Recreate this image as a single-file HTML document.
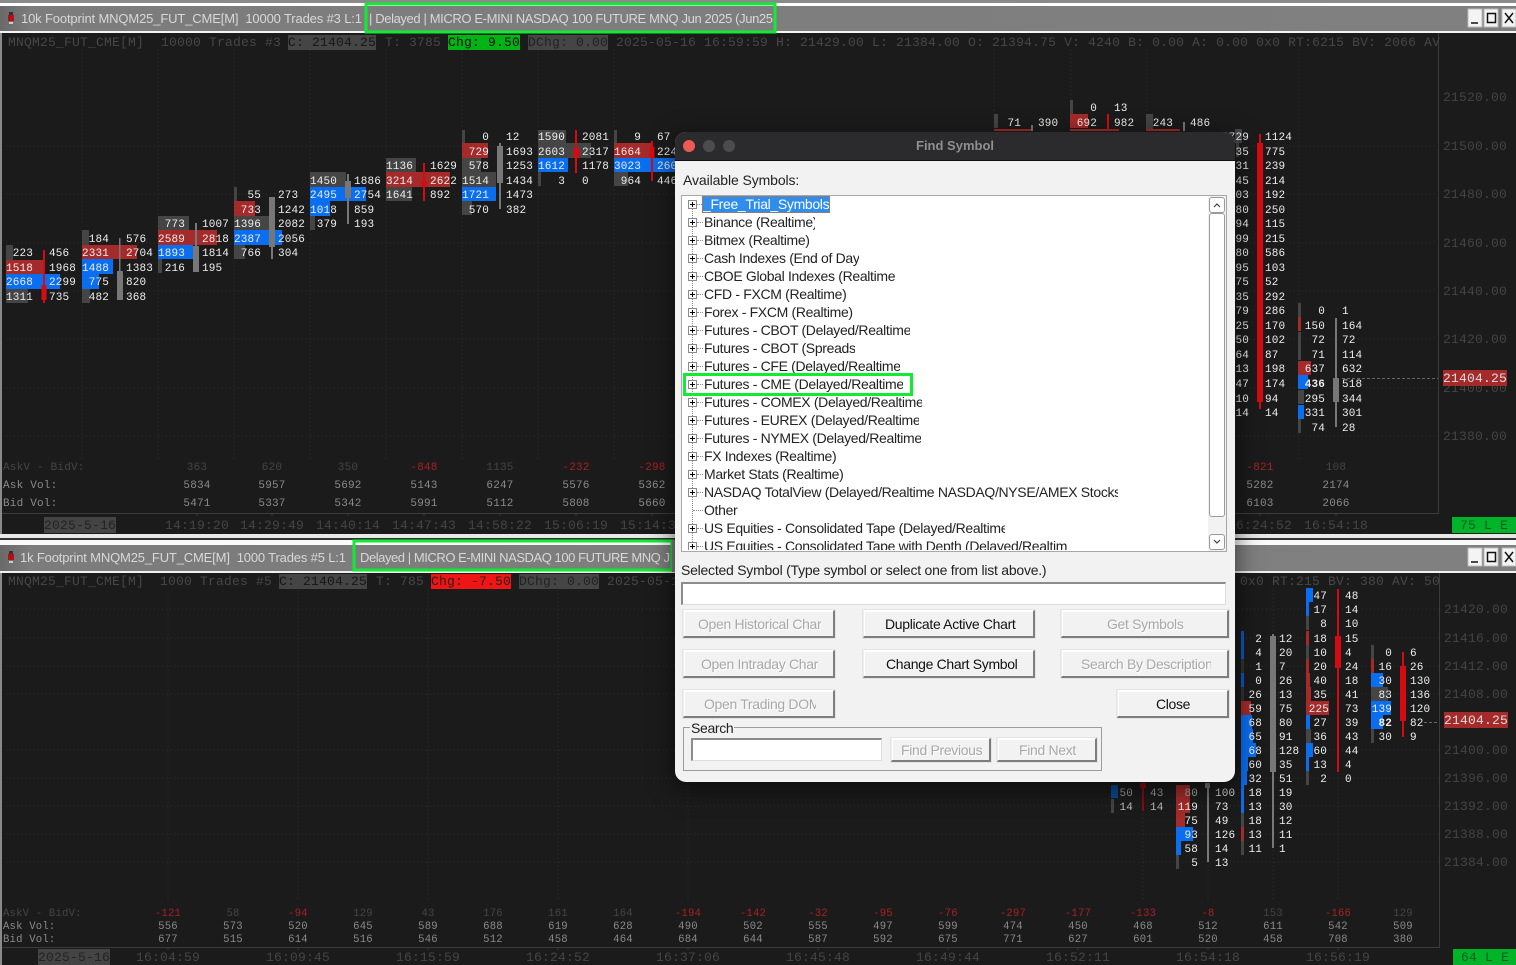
<!DOCTYPE html>
<html><head><meta charset="utf-8"><title>Find Symbol</title>
<style>
html,body{margin:0;padding:0;background:#1b1b1b;width:1516px;height:965px;overflow:hidden}
svg{position:absolute;left:0;top:0}
text{font-family:"Liberation Mono",monospace;white-space:pre}
.f text{font-size:11px;letter-spacing:.15px;fill:#eee}
.f .e{text-anchor:end}
.h text{font-size:13px;letter-spacing:.2px;fill:#474747}
.s text{font-size:11px;letter-spacing:.2px;fill:#8a8a8a;text-anchor:middle}
.s .g{fill:#454545}.s .r{fill:#a82222}.s .l{text-anchor:start}
.ss text{font-size:10.6px}
.t text{font-size:13px;letter-spacing:.2px;fill:#454545;text-anchor:middle}
.a text{font-size:13px;letter-spacing:.2px;fill:#444}
.tt{font-family:"Liberation Sans",sans-serif!important;font-size:13px;fill:#d8d8d8}
.gr{fill:#454545}.re{fill:#a52a2a}.bl{fill:#0a6ef0}.cr{fill:#d40b12}.cg{fill:#777}
.gd{stroke:#2e2e2e;stroke-width:1;stroke-dasharray:1 3;fill:none}
#d,#d div,#d span{position:absolute;box-sizing:border-box}
#d{left:675px;top:132px;width:560px;height:650px;background:#f2f2f2;border-radius:11px;box-shadow:0 6px 26px rgba(0,0,0,.6);overflow:hidden}
#o div,#o span{position:absolute;box-sizing:border-box}
#o{position:absolute;left:0;top:0;width:1516px;height:965px;font:14px "Liberation Sans",sans-serif;color:#222;letter-spacing:-.33px}
.r1{left:704px;height:18px;line-height:18px;white-space:nowrap;overflow:hidden}
.p{left:688px;width:9px;height:9px;border:1px solid #8a8a8a;background:#fff}
.p:before{content:"";position:absolute;left:1px;top:3px;width:5px;height:1px;background:#000}
.p:after{content:"";position:absolute;left:3px;top:1px;width:1px;height:5px;background:#000}
.dt{left:697px;width:6px;border-top:1px dotted #888;height:0}
.b{background:#f2f2f2;border:1px solid #d8d8d8;border-right:2px solid #7d7d7d;border-bottom:2px solid #7d7d7d;border-left-color:#eee;border-top-color:#fff;box-shadow:inset 1px 1px 0 #fff,0 0 0 1px #e4e4e4}
.b span{white-space:nowrap;overflow:hidden;line-height:26px;top:0;height:26px;color:#111}
.x span{color:#a8a8a8;text-shadow:1px 1px 0 #fff}
.in{background:#fff;border:2px solid #8c8c8c;border-right:1px solid #ddd;border-bottom:1px solid #ddd}
.g1{border:3px solid #12ea36}
</style></head><body>
<svg width="1516" height="965" viewBox="0 0 1516 965">
<defs><linearGradient id="tg" x1="0" x2="1" y1="0" y2="0"><stop offset="0" stop-color="#6a6a6a"/><stop offset=".02" stop-color="#7c7c7c"/><stop offset="1" stop-color="#808080"/></linearGradient></defs>
<rect width="1516" height="965" fill="#1b1b1b"/>
<!-- top window frame -->
<rect x="0" y="0" width="1516" height="3" fill="#8a8a8a"/>
<rect x="0" y="3" width="1516" height="3" fill="#fff"/>
<rect x="0" y="6" width="1516" height="25" fill="url(#tg)"/>
<rect x="0" y="31" width="1516" height="2" fill="#f4f4f4"/>
<rect x="0" y="33" width="2" height="501" fill="#8a8a8a"/>
<rect x="0" y="534" width="1516" height="4" fill="#e8e8e8"/>
<rect x="0" y="538" width="1516" height="2" fill="#333"/>
<rect x="0" y="540" width="1516" height="5" fill="#fafafa"/>
<rect x="0" y="545" width="1516" height="26" fill="url(#tg)"/>
<rect x="0" y="571" width="1516" height="2" fill="#f0f0f0"/>
<rect x="0" y="573" width="2" height="392" fill="#8a8a8a"/>
<!-- title icons -->
<g><rect x="9" y="12" width="4" height="3" fill="#333"/><rect x="8" y="15" width="6" height="6" fill="#b01018"/><rect x="9" y="22" width="4" height="2" fill="#ccc"/></g>
<g><rect x="9" y="551" width="4" height="3" fill="#333"/><rect x="8" y="554" width="6" height="6" fill="#b01018"/><rect x="9" y="561" width="4" height="2" fill="#ccc"/></g>
<text class="tt" x="21" y="23" textLength="341" lengthAdjust="spacing">10k Footprint MNQM25_FUT_CME[M]  10000 Trades #3 L:1</text>
<text class="tt" x="369" y="23" textLength="404" lengthAdjust="spacing">| Delayed | MICRO E-MINI NASDAQ 100 FUTURE MNQ Jun 2025 (Jun25</text>
<text class="tt" x="20" y="562" textLength="326" lengthAdjust="spacing">1k Footprint MNQM25_FUT_CME[M]  1000 Trades #5 L:1</text>
<text class="tt" x="360" y="562" textLength="310" lengthAdjust="spacing">Delayed | MICRO E-MINI NASDAQ 100 FUTURE MNQ J</text>
<rect x="366" y="4" width="409" height="28" fill="none" stroke="#12ea36" stroke-width="3"/>
<rect x="354" y="541" width="318" height="29" fill="none" stroke="#12ea36" stroke-width="3"/>
<rect x="672" y="540" width="3" height="32" fill="#808080"/>
<!-- window buttons -->
<g fill="#f4f4f4" stroke="#bbb"><rect x="1468" y="9" width="14" height="18"/><rect x="1484" y="9" width="14" height="18"/><rect x="1502" y="9" width="14" height="18"/><rect x="1468" y="548" width="14" height="18"/><rect x="1484" y="548" width="14" height="18"/><rect x="1502" y="548" width="14" height="18"/></g>
<g fill="none" stroke="#111" stroke-width="1.5"><path d="M1471 23h7M1487.5 13.500h8v9h-8zM1505 13l8 10M1513 13l-8 10M1471 562h7M1487.500 552.500h8v9h-8zM1505 552l8 10M1513 552l-8 10"/></g>
<!-- grids -->
<path class="gd" d="M6 146H1438M6 194H1438M6 243H1438M6 291H1438M6 339H1438M6 388H1438M6 436H1438M82 50V460M158 50V460M234 50V460M310 50V460M386 50V460M462 50V460M538 50V460M614 50V460M1299 50V460M1071 50V460M1147 50V460M994 50V460"/>
<path class="gd" d="M6 609H1439M6 638H1439M6 666H1439M6 694H1439M6 750H1439M6 778H1439M6 806H1439M6 834H1439M6 862H1439M168 590V900M298 590V900M428 590V900M558 590V900M688 590V900M1143 590V900M1208 590V900M1273 590V900M1338 590V900"/>
<!-- axes lines -->
<path d="M1438.500 33V513.500H2M1439.500 573V947.500H2" fill="none" stroke="#3b3b3b"/>
<path d="M197 513v3M272 513v3M348 513v3M424 513v3M500 513v3M576 513v3M652 513v3M1260 513v3M1336 513v3M168 947v3M298 947v3M428 947v3M558 947v3M688 947v3M818 947v3M948 947v3M1078 947v3M1208 947v3M1338 947v3" stroke="#3b3b3b"/>
<path d="M1342 378.500H1438M1424 722.500H1438" stroke="#666" stroke-dasharray="3 2"/>
<!-- status lines -->
<g class="gr"><rect x="288" y="35" width="88" height="15"/><rect x="528" y="35" width="80" height="15"/><rect x="279" y="574" width="88" height="15"/><rect x="519" y="574" width="80" height="15"/></g>
<rect x="448" y="35" width="72" height="15" fill="#00b413"/>
<rect x="431" y="574" width="80" height="15" fill="#f01414"/>
<g class="h">
<text x="8" y="46">MNQM25_FUT_CME[M]</text><text x="161" y="46">10000 Trades #3</text><text x="288" y="46" style="fill:#161616">C: 21404.25</text><text x="385" y="46">T: 3785</text><text x="448" y="46" style="fill:#0a0a0a">Chg: 9.50</text><text x="528" y="46" style="fill:#222">DChg: 0.00</text><text x="616" y="46">2025-05-16 16:59:59 H: 21429.00 L: 21384.00 O: 21394.75 V: 4240 B: 0.00 A: 0.00 0x0 RT:6215 BV: 2066 AV</text>
<text x="8" y="585">MNQM25_FUT_CME[M]</text><text x="160" y="585">1000 Trades #5</text><text x="279" y="585" style="fill:#161616">C: 21404.25</text><text x="376" y="585">T: 785</text><text x="431" y="585" style="fill:#222">Chg: -7.50</text><text x="519" y="585" style="fill:#222">DChg: 0.00</text><text x="607" y="585">2025-05-16</text><text x="1240" y="585">0x0 RT:215 BV: 380 AV: 50</text>
</g>
<!-- axis labels -->
<g class="a"><text x="1443" y="101">21520.00</text><text x="1443" y="150">21500.00</text><text x="1443" y="198">21480.00</text><text x="1443" y="247">21460.00</text><text x="1443" y="295">21440.00</text><text x="1443" y="343">21420.00</text><text x="1443" y="392">21400.00</text><text x="1443" y="440">21380.00</text>
<text x="1444" y="613">21420.00</text><text x="1444" y="642">21416.00</text><text x="1444" y="670">21412.00</text><text x="1444" y="698">21408.00</text><text x="1444" y="754">21400.00</text><text x="1444" y="782">21396.00</text><text x="1444" y="810">21392.00</text><text x="1444" y="838">21388.00</text><text x="1444" y="866">21384.00</text>
<rect x="1443" y="370" width="64" height="16" fill="#a52a2a"/><text x="1443" y="382" style="fill:#ddd">21404.25</text>
<rect x="1444" y="712" width="64" height="16" fill="#a52a2a"/><text x="1444" y="724" style="fill:#ddd">21404.25</text></g>
<!-- top footprint bars -->
<g class="gr"><rect x="6" y="245" width="7" height="15"/><rect x="6" y="289" width="22" height="14"/><rect x="82" y="230" width="7" height="15"/><rect x="82" y="289" width="8" height="14"/><rect x="158" y="216" width="31" height="14"/><rect x="158" y="259" width="4" height="14"/><rect x="234" y="187" width="3" height="14"/><rect x="234" y="216" width="36" height="14"/><rect x="234" y="245" width="11" height="14"/><rect x="310" y="172" width="36" height="15"/><rect x="310" y="216" width="5" height="14"/><rect x="386" y="158" width="30" height="14"/><rect x="386" y="187" width="26" height="14"/><rect x="462" y="130" width="3" height="13"/><rect x="462" y="158" width="19" height="14"/><rect x="462" y="172" width="34" height="15"/><rect x="462" y="201" width="10" height="14"/><rect x="538" y="130" width="28" height="13"/><rect x="538" y="143" width="53" height="15"/><rect x="538" y="172" width="3" height="14"/><rect x="614" y="130" width="3" height="13"/><rect x="614" y="172" width="14" height="14"/>
<rect x="994" y="114" width="4" height="14"/><rect x="1070" y="100" width="3" height="14"/><rect x="1146" y="114" width="7" height="15"/><rect x="1235" y="129" width="7" height="14"/><rect x="1236" y="143" width="3" height="14"/>
<rect x="1298" y="303" width="3" height="14"/><rect x="1298" y="332" width="3" height="14"/><rect x="1298" y="346" width="3" height="14"/><rect x="1298" y="390" width="6" height="14"/><rect x="1298" y="419" width="3" height="14"/></g>
<g class="re"><rect x="6" y="260" width="38" height="14"/><rect x="82" y="245" width="55" height="14"/><rect x="158" y="230" width="59" height="15"/><rect x="234" y="201" width="21" height="15"/><rect x="386" y="172" width="64" height="15"/><rect x="462" y="143" width="26" height="15"/><rect x="614" y="143" width="39" height="15"/><rect x="1070" y="114" width="18" height="14"/><rect x="994" y="129" width="37" height="2"/><rect x="1070" y="129" width="49" height="2"/><rect x="1146" y="129" width="34" height="2"/><rect x="1298" y="317" width="3" height="14"/><rect x="1298" y="361" width="13" height="14"/></g>
<g class="bl"><rect x="6" y="274" width="54" height="15"/><rect x="82" y="259" width="31" height="15"/><rect x="82" y="274" width="17" height="15"/><rect x="158" y="245" width="35" height="14"/><rect x="234" y="230" width="48" height="15"/><rect x="310" y="187" width="56" height="14"/><rect x="310" y="201" width="20" height="15"/><rect x="462" y="187" width="34" height="14"/><rect x="538" y="158" width="30" height="14"/><rect x="614" y="158" width="62" height="14"/><rect x="1298" y="375" width="10" height="14"/><rect x="1298" y="405" width="6" height="14"/></g>
<!-- top candles -->
<g class="cr"><rect x="43" y="250" width="2" height="53"/><rect x="41.500" y="285" width="5" height="15"/><rect x="423" y="163" width="2" height="38"/><rect x="421.500" y="181" width="5" height="5"/><rect x="575" y="130" width="2" height="43"/><rect x="573.500" y="148" width="6" height="10"/><rect x="651" y="141" width="2" height="40"/><rect x="649.500" y="147" width="5" height="11"/><rect x="1107" y="114" width="2" height="16"/><rect x="1259" y="134" width="2" height="275"/><rect x="1257" y="143" width="6" height="259"/></g>
<g class="cg"><rect x="119" y="238" width="1.500" height="62"/><rect x="117" y="271" width="6" height="29"/><rect x="195" y="223" width="2" height="49"/><rect x="193" y="246" width="6" height="26"/><rect x="271" y="197" width="2" height="62"/><rect x="269" y="197" width="6" height="50"/><rect x="347" y="174" width="2" height="50"/><rect x="345" y="181" width="6" height="17"/><rect x="499" y="143" width="2" height="66"/><rect x="497" y="146" width="6" height="37"/><rect x="1031" y="125" width="2" height="6"/><rect x="1183" y="122" width="2" height="9"/><rect x="1335" y="318" width="2" height="109"/><rect x="1333" y="378" width="6" height="24"/></g>
<!-- top footprint numbers -->
<g class="f">
<text class="e" x="33" y="256">223</text><text x="49" y="256">456</text><text class="e" x="33" y="271">1518</text><text x="49" y="271">1968</text><text class="e" x="33" y="285">2668</text><text x="49" y="285">2299</text><text class="e" x="33" y="300">1311</text><text x="49" y="300">735</text>
<text class="e" x="109" y="242">184</text><text x="126" y="242">576</text><text class="e" x="109" y="256">2331</text><text x="126" y="256">2704</text><text class="e" x="109" y="271">1488</text><text x="126" y="271">1383</text><text class="e" x="109" y="285">775</text><text x="126" y="285">820</text><text class="e" x="109" y="300">482</text><text x="126" y="300">368</text>
<text class="e" x="185" y="227">773</text><text x="202" y="227">1007</text><text class="e" x="185" y="242">2589</text><text x="202" y="242">2818</text><text class="e" x="185" y="256">1893</text><text x="202" y="256">1814</text><text class="e" x="185" y="271">216</text><text x="202" y="271">195</text>
<text class="e" x="261" y="198">55</text><text x="278" y="198">273</text><text class="e" x="261" y="213">733</text><text x="278" y="213">1242</text><text class="e" x="261" y="227">1396</text><text x="278" y="227">2082</text><text class="e" x="261" y="242">2387</text><text x="278" y="242">2056</text><text class="e" x="261" y="256">766</text><text x="278" y="256">304</text>
<text class="e" x="337" y="184">1450</text><text x="354" y="184">1886</text><text class="e" x="337" y="198">2495</text><text x="354" y="198">2754</text><text class="e" x="337" y="213">1018</text><text x="354" y="213">859</text><text class="e" x="337" y="227">379</text><text x="354" y="227">193</text>
<text class="e" x="413" y="169">1136</text><text x="430" y="169">1629</text><text class="e" x="413" y="184">3214</text><text x="430" y="184">2622</text><text class="e" x="413" y="198">1641</text><text x="430" y="198">892</text>
<text class="e" x="489" y="140">0</text><text x="506" y="140">12</text><text class="e" x="489" y="155">729</text><text x="506" y="155">1693</text><text class="e" x="489" y="169">578</text><text x="506" y="169">1253</text><text class="e" x="489" y="184">1514</text><text x="506" y="184">1434</text><text class="e" x="489" y="198">1721</text><text x="506" y="198">1473</text><text class="e" x="489" y="213">570</text><text x="506" y="213">382</text>
<text class="e" x="565" y="140">1590</text><text x="582" y="140">2081</text><text class="e" x="565" y="155">2603</text><text x="582" y="155">2317</text><text class="e" x="565" y="169">1612</text><text x="582" y="169">1178</text><text class="e" x="565" y="184">3</text><text x="582" y="184">0</text>
<text class="e" x="641" y="140">9</text><text x="657" y="140">67</text><text class="e" x="641" y="155">1664</text><text x="657" y="155">2242</text><text class="e" x="641" y="169">3023</text><text x="657" y="169">2601</text><text class="e" x="641" y="184">964</text><text x="657" y="184">4461</text>
<text class="e" x="1021" y="126">71</text><text x="1038" y="126">390</text><text class="e" x="1097" y="111">0</text><text x="1114" y="111">13</text><text class="e" x="1097" y="126">692</text><text x="1114" y="126">982</text><text class="e" x="1173" y="126">243</text><text x="1190" y="126">486</text>
<text class="e" x="1249" y="140">729</text><text x="1265" y="140">1124</text><text class="e" x="1249" y="155">35</text><text x="1265" y="155">775</text><text class="e" x="1249" y="169">31</text><text x="1265" y="169">239</text><text class="e" x="1249" y="184">45</text><text x="1265" y="184">214</text><text class="e" x="1249" y="198">03</text><text x="1265" y="198">192</text><text class="e" x="1249" y="213">80</text><text x="1265" y="213">250</text><text class="e" x="1249" y="227">94</text><text x="1265" y="227">115</text><text class="e" x="1249" y="242">99</text><text x="1265" y="242">215</text><text class="e" x="1249" y="256">80</text><text x="1265" y="256">586</text><text class="e" x="1249" y="271">95</text><text x="1265" y="271">103</text><text class="e" x="1249" y="285">75</text><text x="1265" y="285">52</text><text class="e" x="1249" y="300">35</text><text x="1265" y="300">292</text><text class="e" x="1249" y="314">79</text><text x="1265" y="314">286</text><text class="e" x="1249" y="329">25</text><text x="1265" y="329">170</text><text class="e" x="1249" y="343">50</text><text x="1265" y="343">102</text><text class="e" x="1249" y="358">64</text><text x="1265" y="358">87</text><text class="e" x="1249" y="372">13</text><text x="1265" y="372">198</text><text class="e" x="1249" y="387">47</text><text x="1265" y="387">174</text><text class="e" x="1249" y="402">10</text><text x="1265" y="402">94</text><text class="e" x="1249" y="416">14</text><text x="1265" y="416">14</text>
<text class="e" x="1325" y="314">0</text><text x="1342" y="314">1</text><text class="e" x="1325" y="329">150</text><text x="1342" y="329">164</text><text class="e" x="1325" y="343">72</text><text x="1342" y="343">72</text><text class="e" x="1325" y="358">71</text><text x="1342" y="358">114</text><text class="e" x="1325" y="372">637</text><text x="1342" y="372">632</text><text class="e" x="1325" y="387" font-weight="bold">436</text><text x="1342" y="387">518</text><text class="e" x="1325" y="402">295</text><text x="1342" y="402">344</text><text class="e" x="1325" y="416">331</text><text x="1342" y="416">301</text><text class="e" x="1325" y="431">74</text><text x="1342" y="431">28</text>
</g>
<!-- bottom footprint bars -->
<g class="bl"><rect x="1241" y="631" width="3" height="14" fill="#0a58c0"/><rect x="1241" y="645" width="3" height="14" fill="#0a58c0"/><rect x="1241" y="673" width="3" height="14" fill="#0a58c0"/><rect x="1241" y="715" width="11" height="14"/><rect x="1241" y="729" width="12" height="14"/><rect x="1241" y="743" width="15" height="14"/><rect x="1241" y="757" width="7" height="14"/><rect x="1241" y="771" width="6" height="14"/><rect x="1241" y="785" width="3" height="14"/><rect x="1241" y="799" width="3" height="14"/><rect x="1306" y="588" width="7" height="14"/><rect x="1306" y="602" width="3" height="14"/><rect x="1306" y="715" width="4" height="14"/><rect x="1306" y="743" width="7" height="14"/><rect x="1306" y="757" width="3" height="14"/><rect x="1371" y="673" width="12" height="14"/><rect x="1371" y="701" width="20" height="14"/><rect x="1371" y="715" width="12" height="14"/><rect x="1111" y="785" width="7" height="13" style="fill:#0a4a90"/><rect x="1176" y="827" width="17" height="14"/><rect x="1176" y="841" width="5" height="14"/></g>
<g class="gr"><rect x="1241" y="659" width="3" height="14" fill="#333"/><rect x="1241" y="687" width="3" height="14" fill="#333"/><rect x="1241" y="813" width="3" height="14"/><rect x="1241" y="841" width="3" height="14"/><rect x="1306" y="616" width="3" height="14"/><rect x="1306" y="645" width="3" height="14"/><rect x="1306" y="729" width="5" height="14"/><rect x="1306" y="771" width="3" height="14"/><rect x="1371" y="645" width="3" height="14"/><rect x="1371" y="687" width="17" height="14"/><rect x="1371" y="729" width="3" height="14"/><rect x="1111" y="799" width="3" height="14"/><rect x="1176" y="855" width="3" height="14"/></g>
<g class="re"><rect x="1241" y="701" width="10" height="14"/><rect x="1241" y="827" width="3" height="14"/><rect x="1306" y="631" width="3" height="14"/><rect x="1306" y="659" width="3" height="14"/><rect x="1306" y="673" width="4" height="14"/><rect x="1306" y="687" width="5" height="14"/><rect x="1306" y="701" width="23" height="14"/><rect x="1371" y="659" width="3" height="14"/><rect x="1176" y="785" width="14" height="14"/><rect x="1176" y="799" width="14" height="14"/><rect x="1176" y="813" width="9" height="14"/></g>
<g class="cg"><rect x="1272" y="634" width="2" height="214"/><rect x="1270" y="636" width="6" height="136"/><rect x="1207" y="783" width="2" height="79"/><rect x="1205" y="783" width="5" height="5"/></g>
<g class="cr"><rect x="1337" y="589" width="2" height="183"/><rect x="1335" y="636" width="6" height="32"/><rect x="1402" y="652" width="2" height="85"/><rect x="1400" y="666" width="6" height="55"/><rect x="1142" y="783" width="2" height="28" fill="#8a0a10"/><rect x="1140" y="783" width="6" height="5" fill="#8a0a10"/></g>
<!-- bottom numbers -->
<g class="f">
<text class="e" x="1262" y="642">2</text><text x="1279" y="642">12</text><text class="e" x="1262" y="656">4</text><text x="1279" y="656">20</text><text class="e" x="1262" y="670">1</text><text x="1279" y="670">7</text><text class="e" x="1262" y="684">0</text><text x="1279" y="684">26</text><text class="e" x="1262" y="698">26</text><text x="1279" y="698">13</text><text class="e" x="1262" y="712">59</text><text x="1279" y="712">75</text><text class="e" x="1262" y="726">68</text><text x="1279" y="726">80</text><text class="e" x="1262" y="740">65</text><text x="1279" y="740">91</text><text class="e" x="1262" y="754">68</text><text x="1279" y="754">128</text><text class="e" x="1262" y="768">60</text><text x="1279" y="768">35</text><text class="e" x="1262" y="782">32</text><text x="1279" y="782">51</text><text class="e" x="1262" y="796">18</text><text x="1279" y="796">19</text><text class="e" x="1262" y="810">13</text><text x="1279" y="810">30</text><text class="e" x="1262" y="824">18</text><text x="1279" y="824">12</text><text class="e" x="1262" y="838">13</text><text x="1279" y="838">11</text><text class="e" x="1262" y="852">11</text><text x="1279" y="852">1</text>
<text class="e" x="1327" y="599">47</text><text x="1345" y="599">48</text><text class="e" x="1327" y="613">17</text><text x="1345" y="613">14</text><text class="e" x="1327" y="627">8</text><text x="1345" y="627">10</text><text class="e" x="1327" y="642">18</text><text x="1345" y="642">15</text><text class="e" x="1327" y="656">10</text><text x="1345" y="656">4</text><text class="e" x="1327" y="670">20</text><text x="1345" y="670">24</text><text class="e" x="1327" y="684">40</text><text x="1345" y="684">18</text><text class="e" x="1327" y="698">35</text><text x="1345" y="698">41</text><text class="e" x="1329" y="712">225</text><text x="1345" y="712">73</text><text class="e" x="1327" y="726">27</text><text x="1345" y="726">39</text><text class="e" x="1327" y="740">36</text><text x="1345" y="740">43</text><text class="e" x="1327" y="754">60</text><text x="1345" y="754">44</text><text class="e" x="1327" y="768">13</text><text x="1345" y="768">4</text><text class="e" x="1327" y="782">2</text><text x="1345" y="782">0</text>
<text class="e" x="1392" y="656">0</text><text x="1410" y="656">6</text><text class="e" x="1392" y="670">16</text><text x="1410" y="670">26</text><text class="e" x="1392" y="684">30</text><text x="1410" y="684">130</text><text class="e" x="1392" y="698">83</text><text x="1410" y="698">136</text><text class="e" x="1392" y="712">139</text><text x="1410" y="712">120</text><text class="e" x="1392" y="726" font-weight="bold">82</text><text x="1410" y="726">82</text><text class="e" x="1392" y="740">30</text><text x="1410" y="740">9</text>
<text class="e" x="1133" y="796" style="fill:#999">50</text><text x="1150" y="796" style="fill:#999">43</text><text class="e" x="1133" y="810" style="fill:#bbb">14</text><text x="1150" y="810" style="fill:#bbb">14</text>
<text class="e" x="1198" y="796" style="fill:#aaa">80</text><text x="1215" y="796" style="fill:#ccc">100</text><text class="e" x="1198" y="810">119</text><text x="1215" y="810">73</text><text class="e" x="1198" y="824">75</text><text x="1215" y="824">49</text><text class="e" x="1198" y="838">93</text><text x="1215" y="838">126</text><text class="e" x="1198" y="852">58</text><text x="1215" y="852">14</text><text class="e" x="1198" y="866">5</text><text x="1215" y="866">13</text>
</g>
<!-- top stats -->
<g class="s">
<text class="g l" x="3" y="470">AskV - BidV:</text><text class="l" x="3" y="488">Ask Vol:</text><text class="l" x="3" y="506">Bid Vol:</text>
<text class="g" x="197" y="470">363</text><text x="197" y="488">5834</text><text x="197" y="506">5471</text>
<text class="g" x="272" y="470">620</text><text x="272" y="488">5957</text><text x="272" y="506">5337</text>
<text class="g" x="348" y="470">350</text><text x="348" y="488">5692</text><text x="348" y="506">5342</text>
<text class="r" x="424" y="470">-848</text><text x="424" y="488">5143</text><text x="424" y="506">5991</text>
<text class="g" x="500" y="470">1135</text><text x="500" y="488">6247</text><text x="500" y="506">5112</text>
<text class="r" x="576" y="470">-232</text><text x="576" y="488">5576</text><text x="576" y="506">5808</text>
<text class="r" x="652" y="470">-298</text><text x="652" y="488">5362</text><text x="652" y="506">5660</text>
<text class="r" x="1260" y="470">-821</text><text x="1260" y="488">5282</text><text x="1260" y="506">6103</text>
<text class="g" x="1336" y="470">108</text><text x="1336" y="488">2174</text><text x="1336" y="506">2066</text>
</g>
<!-- bottom stats -->
<g class="s ss">
<text class="g l" x="3" y="916">AskV - BidV:</text><text class="l" x="3" y="929">Ask Vol:</text><text class="l" x="3" y="942">Bid Vol:</text>
<text class="r" x="168" y="916">-121</text><text x="168" y="929">556</text><text x="168" y="942">677</text>
<text class="g" x="233" y="916">58</text><text x="233" y="929">573</text><text x="233" y="942">515</text>
<text class="r" x="298" y="916">-94</text><text x="298" y="929">520</text><text x="298" y="942">614</text>
<text class="g" x="363" y="916">129</text><text x="363" y="929">645</text><text x="363" y="942">516</text>
<text class="g" x="428" y="916">43</text><text x="428" y="929">589</text><text x="428" y="942">546</text>
<text class="g" x="493" y="916">176</text><text x="493" y="929">688</text><text x="493" y="942">512</text>
<text class="g" x="558" y="916">161</text><text x="558" y="929">619</text><text x="558" y="942">458</text>
<text class="g" x="623" y="916">164</text><text x="623" y="929">628</text><text x="623" y="942">464</text>
<text class="r" x="688" y="916">-194</text><text x="688" y="929">490</text><text x="688" y="942">684</text>
<text class="r" x="753" y="916">-142</text><text x="753" y="929">502</text><text x="753" y="942">644</text>
<text class="r" x="818" y="916">-32</text><text x="818" y="929">555</text><text x="818" y="942">587</text>
<text class="r" x="883" y="916">-95</text><text x="883" y="929">497</text><text x="883" y="942">592</text>
<text class="r" x="948" y="916">-76</text><text x="948" y="929">599</text><text x="948" y="942">675</text>
<text class="r" x="1013" y="916">-297</text><text x="1013" y="929">474</text><text x="1013" y="942">771</text>
<text class="r" x="1078" y="916">-177</text><text x="1078" y="929">450</text><text x="1078" y="942">627</text>
<text class="r" x="1143" y="916">-133</text><text x="1143" y="929">468</text><text x="1143" y="942">601</text>
<text class="r" x="1208" y="916">-8</text><text x="1208" y="929">512</text><text x="1208" y="942">520</text>
<text class="g" x="1273" y="916">153</text><text x="1273" y="929">611</text><text x="1273" y="942">458</text>
<text class="r" x="1338" y="916">-166</text><text x="1338" y="929">542</text><text x="1338" y="942">708</text>
<text class="g" x="1403" y="916">129</text><text x="1403" y="929">509</text><text x="1403" y="942">380</text>
</g>
<!-- time axes -->
<rect x="44" y="517" width="72" height="16" fill="#444"/><rect x="38" y="949" width="72" height="16" fill="#444"/>
<rect x="1452" y="517" width="64" height="16" fill="#00b42a"/><rect x="1453" y="949" width="63" height="16" fill="#00b42a"/>
<g class="t">
<text x="80" y="529" style="fill:#222">2025-5-16</text><text x="197" y="529">14:19:20</text><text x="272" y="529">14:29:49</text><text x="348" y="529">14:40:14</text><text x="424" y="529">14:47:43</text><text x="500" y="529">14:58:22</text><text x="576" y="529">15:06:19</text><text x="652" y="529">15:14:38</text><text x="1260" y="529">16:24:52</text><text x="1336" y="529">16:54:18</text>
<text x="1484" y="529" style="fill:#1d5a22">75 L E</text>
<text x="74" y="961" style="fill:#222">2025-5-16</text><text x="168" y="961">16:04:59</text><text x="298" y="961">16:09:45</text><text x="428" y="961">16:15:59</text><text x="558" y="961">16:24:52</text><text x="688" y="961">16:37:06</text><text x="818" y="961">16:45:48</text><text x="948" y="961">16:49:44</text><text x="1078" y="961">16:52:11</text><text x="1208" y="961">16:54:18</text><text x="1338" y="961">16:56:19</text>
<text x="1485" y="961" style="fill:#1d5a22">64 L E</text>
</g>
</svg>

<div id="d"></div>
<div id="o">
<div style="left:675px;top:132px;width:560px;height:29px;background:#2b2b2d;border-radius:11px 11px 0 0;border-bottom:1px solid #111"></div>
<div style="left:683px;top:140px;width:12px;height:12px;border-radius:50%;background:#ed5a54"></div>
<div style="left:703px;top:140px;width:12px;height:12px;border-radius:50%;background:#4c4c4e"></div>
<div style="left:723px;top:140px;width:12px;height:12px;border-radius:50%;background:#4c4c4e"></div>
<div style="left:675px;top:137px;width:560px;text-align:center;font-size:13px;font-weight:bold;color:#8f8f8f;line-height:17px;letter-spacing:0">Find Symbol</div>
<div style="left:683px;top:172px;line-height:17px;white-space:nowrap;letter-spacing:-.1px">Available Symbols:</div>

<div style="left:681px;top:195px;width:546px;height:357px;background:#fff;border:1px solid #a8a8a8"></div>
<div style="left:692px;top:205px;width:0;height:345px;border-left:1px dotted #888"></div>
<div style="left:702px;top:196px;width:128px;height:17px;background:#2f8ded;border:1px dotted #e06a10"></div>
<div class="r1" style="top:195px;left:703px;width:126px;color:#fff">_Free_Trial_Symbols</div>

<div class="p" style="top:200px"></div><div class="dt" style="top:204px;width:5px"></div>
<div class="p" style="top:218px"></div><div class="dt" style="top:222px"></div><div class="r1" style="top:213px;width:111px">Binance (Realtime)</div>
<div class="p" style="top:236px"></div><div class="dt" style="top:240px"></div><div class="r1" style="top:231px;width:112px">Bitmex (Realtime)</div>
<div class="p" style="top:254px"></div><div class="dt" style="top:258px"></div><div class="r1" style="top:249px;width:155px">Cash Indexes (End of Day)</div>
<div class="p" style="top:272px"></div><div class="dt" style="top:276px"></div><div class="r1" style="top:267px;width:191px">CBOE Global Indexes (Realtime)</div>
<div class="p" style="top:290px"></div><div class="dt" style="top:294px"></div><div class="r1" style="top:285px;width:146px">CFD - FXCM (Realtime)</div>
<div class="p" style="top:308px"></div><div class="dt" style="top:312px"></div><div class="r1" style="top:303px;width:152px">Forex - FXCM (Realtime)</div>
<div class="p" style="top:326px"></div><div class="dt" style="top:330px"></div><div class="r1" style="top:321px;width:206px">Futures - CBOT (Delayed/Realtime)</div>
<div class="p" style="top:344px"></div><div class="dt" style="top:348px"></div><div class="r1" style="top:339px;width:151px">Futures - CBOT (Spreads)</div>
<div class="p" style="top:362px"></div><div class="dt" style="top:366px"></div><div class="r1" style="top:357px;width:196px">Futures - CFE (Delayed/Realtime)</div>
<div class="p" style="top:380px"></div><div class="dt" style="top:384px"></div><div class="r1" style="top:375px;width:199px">Futures - CME (Delayed/Realtime)</div>
<div class="p" style="top:398px"></div><div class="dt" style="top:402px"></div><div class="r1" style="top:393px;width:218px">Futures - COMEX (Delayed/Realtime)</div>
<div class="p" style="top:416px"></div><div class="dt" style="top:420px"></div><div class="r1" style="top:411px;width:215px">Futures - EUREX (Delayed/Realtime)</div>
<div class="p" style="top:434px"></div><div class="dt" style="top:438px"></div><div class="r1" style="top:429px;width:217px">Futures - NYMEX (Delayed/Realtime)</div>
<div class="p" style="top:452px"></div><div class="dt" style="top:456px"></div><div class="r1" style="top:447px;width:138px">FX Indexes (Realtime)</div>
<div class="p" style="top:470px"></div><div class="dt" style="top:474px"></div><div class="r1" style="top:465px;width:146px">Market Stats (Realtime)</div>
<div class="p" style="top:488px"></div><div class="dt" style="top:492px"></div><div class="r1" style="top:483px;width:414px">NASDAQ TotalView (Delayed/Realtime NASDAQ/NYSE/AMEX Stocks)</div>
<div class="dt" style="top:510px;left:693px;width:10px"></div><div class="r1" style="top:501px;width:60px">Other</div>
<div class="p" style="top:524px"></div><div class="dt" style="top:528px"></div><div class="r1" style="top:519px;width:301px">US Equities - Consolidated Tape (Delayed/Realtime)</div>
<div class="p" style="top:542px;height:8px;border-bottom:0"></div><div class="dt" style="top:546px"></div><div class="r1" style="top:537px;width:363px;height:13px">US Equities - Consolidated Tape with Depth (Delayed/Realtime)</div>

<div style="left:1208px;top:196px;width:18px;height:355px;background:#f2f2f2"></div>
<div style="left:1209px;top:197px;width:16px;height:16px;background:#fff;border:1px solid #9a9a9a;border-radius:3px"></div>
<div style="left:1209px;top:213px;width:16px;height:304px;background:#fff;border:1px solid #9a9a9a;border-radius:3px"></div>
<div style="left:1209px;top:534px;width:16px;height:16px;background:#fff;border:1px solid #9a9a9a;border-radius:3px"></div>
<svg style="left:0;top:0" width="1516" height="965"><path d="M1214 207l3-3 3 3M1214 540l3 3 3-3" fill="none" stroke="#444" stroke-width="1.200"/></svg>
<div class="g1" style="left:683px;top:373px;width:230px;height:23px"></div>

<div style="left:681px;top:562px;line-height:17px;white-space:nowrap;letter-spacing:-.24px">Selected Symbol (Type symbol or select one from list above.)</div>
<div class="in" style="left:681px;top:582px;width:545px;height:23px"></div>

<div class="b x" style="left:683px;top:610px;width:152px;height:28px"><span style="left:14px;width:123px">Open Historical Chart</span></div>
<div class="b" style="left:863px;top:610px;width:172px;height:28px"><span style="left:21px;width:135px">Duplicate Active Chart</span></div>
<div class="b x" style="left:1061px;top:610px;width:168px;height:28px"><span style="left:45px;width:77px">Get Symbols</span></div>
<div class="b x" style="left:683px;top:650px;width:152px;height:28px"><span style="left:17px;width:117px">Open Intraday Chart</span></div>
<div class="b" style="left:863px;top:650px;width:172px;height:28px"><span style="left:22px;width:135px">Change Chart Symbol</span></div>
<div class="b x" style="left:1061px;top:650px;width:168px;height:28px"><span style="left:19px;width:130px">Search By Description</span></div>
<div class="b x" style="left:683px;top:690px;width:152px;height:28px"><span style="left:20px;width:112px">Open Trading DOM</span></div>
<div class="b" style="left:1117px;top:690px;width:112px;height:28px"><span style="left:38px;width:50px">Close</span></div>

<div style="left:683px;top:727px;width:419px;height:44px;border:1px solid #9c9c9c"></div>
<div style="left:690px;top:720px;background:#f2f2f2;line-height:17px;white-space:nowrap;padding:0 1px">Search</div>
<div class="in" style="left:691px;top:738px;width:191px;height:23px"></div>
<div class="b x" style="left:891px;top:738px;width:100px;height:24px"><span style="left:9px;width:81px;line-height:22px;height:22px">Find Previous</span></div>
<div class="b x" style="left:997px;top:738px;width:100px;height:24px"><span style="left:21px;width:57px;line-height:22px;height:22px">Find Next</span></div>
</div>
</body></html>
